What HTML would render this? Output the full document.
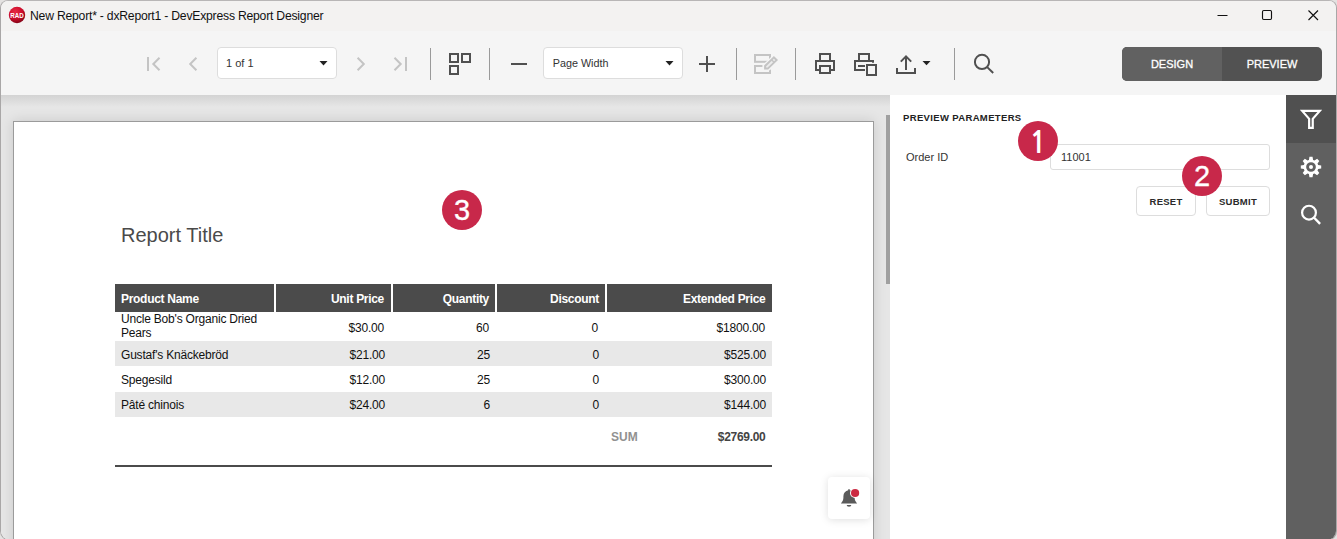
<!DOCTYPE html>
<html lang="en">
<head>
<meta charset="utf-8">
<title>New Report* - dxReport1 - DevExpress Report Designer</title>
<style>
*{box-sizing:border-box;margin:0;padding:0}
html,body{width:1337px;height:539px;overflow:hidden;background:#e4e2e1;font-family:"Liberation Sans",sans-serif;}
.abs{position:absolute}
#win{position:absolute;left:0;top:0;width:1337px;height:541px;background:#f5f5f5;border:1px solid #a9a7a7;border-top-color:#b8b6b6;border-radius:8px 8px 10px 10px;overflow:hidden}
#titlebar{position:absolute;left:0;top:0;width:1335px;height:30px;background:#f3f2f1}
#title{position:absolute;left:29px;top:8px;font-size:12.2px;color:#111;white-space:nowrap;letter-spacing:-0.22px}
#toolbar{position:absolute;left:0;top:30px;width:1335px;height:64px;background:#f5f5f5}
.combo{position:absolute;top:16px;height:32px;background:#fff;border:1px solid #ddd;border-radius:4px;font-size:11px;color:#333;line-height:30px;padding-left:8px}
.combo .car{position:absolute;right:9px;top:13px;width:0;height:0;border-left:4px solid transparent;border-right:4px solid transparent;border-top:5px solid #222}
.sep{position:absolute;top:17px;width:1px;height:32px;background:#9a9a9a}
.ico{position:absolute;overflow:visible}
#gray{position:absolute;left:0;top:94px;width:889px;height:460px;background:#e6e6e6;overflow:hidden}
#gray:before{content:"";position:absolute;left:0;top:0;width:100%;height:12px;background:linear-gradient(#d3d3d3,#e6e6e6)}
#page{position:absolute;left:12px;top:26px;width:861px;height:441px;background:#fff;border:1px solid #9b9b9b;box-shadow:0 0 12px rgba(0,0,0,0.13)}
#thumb{position:absolute;left:885px;top:20px;width:4px;height:169px;background:#a0a0a0}
#panel{position:absolute;left:889px;top:94px;width:397px;height:460px;background:#fff}
#side{position:absolute;left:1285px;top:94px;width:51px;height:460px;background:#606060}
#side .act{position:absolute;left:0;top:0;width:51px;height:48px;background:#505050}
.btns{position:absolute;left:1121px;top:16px;width:200px;height:34px;border-radius:5px;overflow:hidden;background:#525252;font-size:11px;font-weight:normal;color:#fff;-webkit-text-stroke:0.3px #fff}
.btns div{position:absolute;top:0;height:34px;line-height:34px;text-align:center}
.badge{position:absolute;width:40px;height:40px;border-radius:50%;background:#c8284a;color:#fff;font-size:29px;line-height:41px;text-align:center;-webkit-text-stroke:0.35px #fff}
table{border-collapse:separate;border-spacing:0}
.rt{position:absolute;left:102px;top:0}
.row{position:absolute;left:102px;width:657px;font-size:12px;color:#111;letter-spacing:-0.2px}
.row span{position:absolute;white-space:nowrap}
.hd{position:absolute;top:161px;height:28px;background:#4b4b4b;color:#fff;font-weight:bold;font-size:12px;line-height:31px;letter-spacing:-0.3px}
.r{text-align:right}
.pbtn{position:absolute;top:91px;height:30px;border:1px solid #ddd;border-radius:4px;background:#fff;font-size:9.500px;letter-spacing:0.250px;font-weight:bold;color:#2a2a2a;text-align:center;line-height:30px}
</style>
</head>
<body>
<div id="win">
  <div id="titlebar">
    <svg class="ico" style="left:7px;top:5px" width="18" height="18" viewBox="0 0 18 18">
      <defs><radialGradient id="rg" cx="40%" cy="30%" r="70%"><stop offset="0" stop-color="#e62a44"/><stop offset="0.6" stop-color="#cc0c2a"/><stop offset="1" stop-color="#860518"/></radialGradient></defs>
      <circle cx="9" cy="9" r="8.200" fill="url(#rg)"/>
      <text x="2.300" y="11.800" font-family="Liberation Sans, sans-serif" font-size="7.800" font-weight="bold" fill="#fff" textLength="13.400" lengthAdjust="spacingAndGlyphs">RAD</text>
    </svg>
    <div id="title">New Report* - dxReport1 - DevExpress Report Designer</div>
    <svg class="ico" style="left:1210px;top:4px" width="120" height="20" viewBox="0 0 120 20" fill="none" stroke="#111" stroke-width="1.150">
      <path d="M6.5 10.5h10"/>
      <rect x="51.500" y="5.500" width="9" height="9" rx="1.2"/>
      <path d="M97.500 5.500l9.500 9.500M107 5.500l-9.500 9.500"/>
    </svg>
  </div>
  <div id="toolbar">
    <svg class="ico" style="left:0;top:0;z-index:2" width="1335" height="64" viewBox="0 0 1335 64" fill="none" stroke="#c4c4c4" stroke-width="2">
      <!-- first -->
      <path d="M147 26v14M158.500 26.700L152.300 33l6.200 6.300"/>
      <!-- prev -->
      <path d="M195.400 26.700L189.200 33l6.200 6.300"/>
      <!-- next -->
      <path d="M356.600 26.700L362.800 33l-6.200 6.300"/>
      <!-- last -->
      <path d="M393.500 26.700L399.700 33l-6.200 6.300M405 26v14"/>
      <g stroke="#505050" stroke-width="2">
        <!-- multipage -->
        <rect x="449" y="23" width="8" height="8"/><rect x="461" y="23" width="8" height="8"/><rect x="449" y="35" width="8" height="8"/>
        <!-- minus -->
        <path d="M510 33h16"/>
        <!-- plus -->
        <path d="M698 33h16M706 25v16"/>
        <!-- print -->
        <path d="M819 30V23h10v7M818 39h-3v-9h18v9h-3"/>
        <rect x="819" y="35" width="10" height="7"/>
        <!-- print page -->
        <path d="M858 30V23h10v7M864 39h-10v-9h18v1.700M857 35h7"/>
        <rect x="866" y="34" width="9" height="10"/>
        <!-- export -->
        <path d="M905 39V25.400M899.800 30.600l5.200-5.200 5.200 5.200M896 37v5h18v-5"/>
        <!-- search -->
        <circle cx="981" cy="30.900" r="7.100"/><path d="M986.200 36.100l6 5.900"/>
      </g>
      <!-- edit disabled -->
      <g stroke="#c4c4c4" stroke-width="2">
        <rect x="754" y="24" width="15" height="6.800"/>
        <path d="M761.500 35H754v7h15v-3.500"/>
        <path d="M764.100 37.600V35l8.800-8.600 2.700 2.700-8.800 8.500z" stroke="#f5f5f5" stroke-width="4.600" stroke-linejoin="miter"/>
        <path d="M764.100 37.600V35l8.800-8.600 2.700 2.700-8.800 8.500z" fill="#ececec"/>
        <path d="M770.600 28.700l2.700 2.700" stroke-width="1.400"/>
      </g>
      <path d="M921.500 30h8l-4 4.300z" fill="#222" stroke="none"/>
      <path d="M318.500 30h8l-4 4.500z" fill="#222" stroke="none"/>
      <path d="M664.500 30h8l-4 4.500z" fill="#222" stroke="none"/>
    </svg>
    <div class="combo" style="left:216px;width:120px">1 of 1</div>
    <div class="combo" style="left:542px;width:140px;font-size:10.800px;padding-left:8.700px">Page Width</div>
    <div class="sep" style="left:429px"></div>
    <div class="sep" style="left:488px"></div>
    <div class="sep" style="left:735px"></div>
    <div class="sep" style="left:794px"></div>
    <div class="sep" style="left:953px"></div>
    <div class="btns"><div style="left:0;width:100px;background:#616161">DESIGN</div><div style="left:100px;width:100px">PREVIEW</div></div>
  </div>

  <div id="gray">
    <div id="page"><div class="abs" style="left:0;top:1px;width:859px;height:438px">
      <div class="abs" style="left:107px;top:101px;font-size:20px;color:#4a4a4a;white-space:nowrap">Report Title</div>
      <div class="hd" style="left:101px;width:159px;padding-left:6px">Product Name</div>
      <div class="hd r" style="left:262px;width:115px;padding-right:7px">Unit Price</div>
      <div class="hd r" style="left:379px;width:102px;padding-right:6px">Quantity</div>
      <div class="hd r" style="left:483px;width:108px;padding-right:6px">Discount</div>
      <div class="hd r" style="left:593px;width:165px;padding-right:6.500px">Extended Price</div>

      <div class="abs" style="left:101px;top:218px;width:657px;height:25px;background:#e8e8e8"></div>
      <div class="abs" style="left:101px;top:269px;width:657px;height:25px;background:#e8e8e8"></div>

      <div class="row" style="left:0;top:0;width:860px">
        <span style="left:107px;top:189px;line-height:14px;white-space:normal;width:150px">Uncle Bob's Organic Dried Pears</span>
        <span style="right:490px;top:198px">$30.00</span><span style="right:385px;top:198px">60</span><span style="right:276px;top:198px">0</span><span style="right:109px;top:198px">$1800.00</span>
        <span style="left:107px;top:225px">Gustaf's Knäckebröd</span>
        <span style="right:489px;top:225px">$21.00</span><span style="right:384px;top:225px">25</span><span style="right:275px;top:225px">0</span><span style="right:108px;top:225px">$525.00</span>
        <span style="left:107px;top:250px">Spegesild</span>
        <span style="right:489px;top:250px">$12.00</span><span style="right:384px;top:250px">25</span><span style="right:275px;top:250px">0</span><span style="right:108px;top:250px">$300.00</span>
        <span style="left:107px;top:275px">Pâté chinois</span>
        <span style="right:489px;top:275px">$24.00</span><span style="right:384px;top:275px">6</span><span style="right:275px;top:275px">0</span><span style="right:108px;top:275px">$144.00</span>
        <span style="left:597px;top:307px;color:#919191;font-weight:bold;letter-spacing:0">SUM</span>
        <span style="right:108.500px;top:307px;color:#444;font-weight:bold;letter-spacing:-0.3px">$2769.00</span>
      </div>
      <div class="abs" style="left:101px;top:342px;width:657px;height:2px;background:#4b4b4b"></div>
      <div class="badge" style="left:428px;top:67px">3</div>
      <div class="abs" style="left:814px;top:354px;width:42px;height:42px;background:#fff;border-radius:4px;box-shadow:0 1px 8px rgba(0,0,0,0.13)">
        <svg class="ico" style="left:11px;top:10px" width="22" height="22" viewBox="0 0 22 22">
          <path d="M1.900 16.400H18.100C16.500 14.700 15.600 13 15.600 10.500V9.200C15.600 5.800 13.500 3.700 10.800 3.200V2.200H9.200V3.200C6.500 3.700 4.400 5.800 4.400 9.200V10.500C4.400 13 3.500 14.700 1.900 16.400z" fill="#5a5a5a"/>
          <path d="M7.700 18h4.600a2.300 1.800 0 0 1-4.600 0z" fill="#5a5a5a"/>
          <circle cx="16.100" cy="6" r="5.100" fill="#fff"/>
          <circle cx="16.100" cy="6" r="4.100" fill="#cb2941"/>
        </svg>
      </div>
    </div></div>
    <div id="thumb"></div>
  </div>

  <div id="panel">
    <div class="abs" style="left:13px;top:17px;font-size:9.500px;letter-spacing:0.350px;font-weight:bold;color:#222;white-space:nowrap">PREVIEW PARAMETERS</div>
    <div class="abs" style="left:16px;top:56px;font-size:11px;color:#333;white-space:nowrap">Order ID</div>
    <div class="abs" style="left:160px;top:49px;width:220px;height:26px;border:1px solid #ddd;border-radius:3px;font-size:11px;color:#333;line-height:25px;padding-left:10px">11001</div>
    <div class="pbtn" style="left:246px;width:60px">RESET</div>
    <div class="pbtn" style="left:316px;width:64px">SUBMIT</div>
    <div class="badge" style="left:128px;top:26px;font-family:'NanumGothic','Liberation Sans',sans-serif;font-weight:bold;font-size:29px;line-height:45px;-webkit-text-stroke:0">1</div>
    <div class="badge" style="left:292px;top:61px">2</div>
  </div>

  <div id="side">
    <div class="act"></div>
    <svg class="ico" style="left:0;top:0" width="51" height="150" viewBox="0 0 51 150" fill="none" stroke="#fff" stroke-width="2">
      <path d="M16.200 15.850H33.800L26.750 23.900V32.800H23.150V23.900z" stroke-linejoin="miter" stroke-width="2.200"/>
      <path d="M22.90 64.90L23.45 61.80L26.55 61.80L27.10 64.90A7.4 7.4 0 0 1 28.53 65.50L28.53 65.50L31.12 63.69L33.31 65.88L31.50 68.47A7.4 7.4 0 0 1 32.10 69.90L32.10 69.90L35.20 70.45L35.20 73.55L32.10 74.10A7.4 7.4 0 0 1 31.50 75.53L31.50 75.53L33.31 78.12L31.12 80.31L28.53 78.50A7.4 7.4 0 0 1 27.10 79.10L27.10 79.10L26.55 82.20L23.45 82.20L22.90 79.10A7.4 7.4 0 0 1 21.47 78.50L21.47 78.50L18.88 80.31L16.69 78.12L18.50 75.53A7.4 7.4 0 0 1 17.90 74.10L17.90 74.10L14.80 73.55L14.80 70.45L17.90 69.90A7.4 7.4 0 0 1 18.50 68.47L18.50 68.47L16.69 65.88L18.88 63.69L21.47 65.50A7.4 7.4 0 0 1 22.90 64.90zM20.15 72.00 a4.85 4.85 0 1 0 9.70 0 a4.85 4.85 0 1 0 -9.70 0z" fill="#fff" fill-rule="evenodd" stroke="none"/>
      <circle cx="25" cy="72" r="2" fill="#fff" stroke="none"/>
      <circle cx="23" cy="117.650" r="6.900" stroke-width="2.200"/><path d="M27.900 122.500l6.200 6.400" stroke-width="2.400"/>
    </svg>
  </div>
</div>
</body>
</html>
